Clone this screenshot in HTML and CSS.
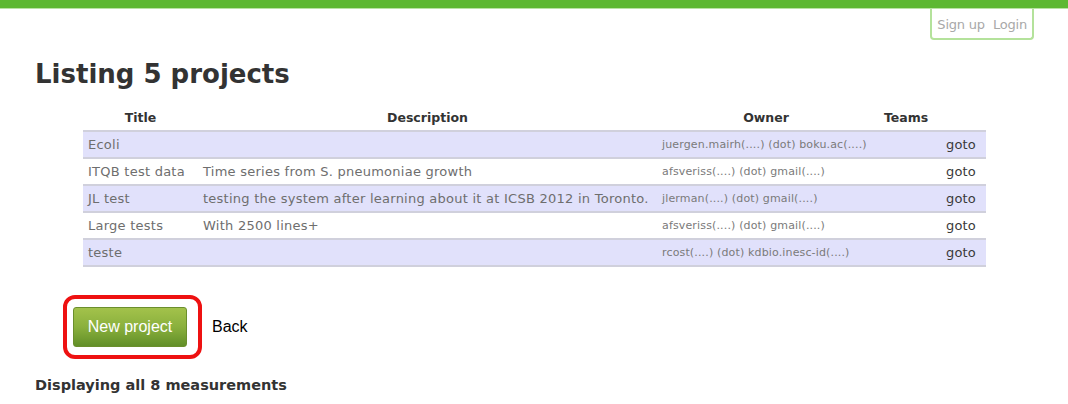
FILE: index.html
```html
<!DOCTYPE html>
<html>
<head>
<meta charset="utf-8">
<link rel="stylesheet" href="styles.css">
</head>
<body>
<div class="topbar"></div>
<div class="userbar">
  <div class="userbox"><a href="#">Sign up</a><a href="#">Login</a></div>
</div>
<main class="content">
  <h1 class="title">Listing 5 projects</h1>
  <table class="projects">
    <thead>
      <tr><th class="c-title">Title</th><th class="c-desc">Description</th><th class="c-owner">Owner</th><th class="c-teams">Teams</th><th class="c-goto"></th></tr>
    </thead>
    <tbody>
      <tr class="odd"><td>Ecoli</td><td></td><td class="owner">juergen.mairh(....) (dot) boku.ac(....)</td><td></td><td class="goto">goto</td></tr>
      <tr><td>ITQB test data</td><td>Time series from S. pneumoniae growth</td><td class="owner">afsveriss(....) (dot) gmail(....)</td><td></td><td class="goto">goto</td></tr>
      <tr class="odd"><td>JL test</td><td>testing the system after learning about it at ICSB 2012 in Toronto.</td><td class="owner">jlerman(....) (dot) gmail(....)</td><td></td><td class="goto">goto</td></tr>
      <tr><td>Large tests</td><td>With 2500 lines+</td><td class="owner">afsveriss(....) (dot) gmail(....)</td><td></td><td class="goto">goto</td></tr>
      <tr class="odd"><td>teste</td><td></td><td class="owner">rcost(....) (dot) kdbio.inesc-id(....)</td><td></td><td class="goto">goto</td></tr>
    </tbody>
  </table>
  <div class="actions">
    <div class="highlight"><a class="btn" href="#">New project</a></div>
    <a class="back" href="#">Back</a>
  </div>
  <h2 class="sub">Displaying all 8 measurements</h2>
</main>
</body>
</html>
```
FILE: styles.css
```css
html, body {
  margin: 0;
  padding: 0;
  background: #fff;
}
body {
  font-family: "DejaVu Sans", Verdana, sans-serif;
  color: #333;
}
.topbar {
  height: 8px;
  background: #5db832;
  border-bottom: 1px solid #b9e3a3;
}
.userbar {
  display: flex;
  justify-content: flex-end;
  padding-right: 34px;
}
.userbox {
  display: flex;
  gap: 8px;
  height: 28px;
  align-items: center;
  padding: 1px 5px 0 5px;
  border: 2px solid #b4e29b;
  border-top: none;
  border-radius: 0 0 4px 4px;
}
.userbox a {
  font-size: 13px;
  color: #a8a8a8;
  text-decoration: none;
  letter-spacing: -0.2px;
}
.content {
  padding: 0 0 0 35px;
}
.title {
  margin: 18px 0 0 0;
  font-size: 26px;
  line-height: 32px;
  font-weight: bold;
  color: #333;
}
.projects {
  margin: 17px 0 0 48px;
  width: 903px;
  border-collapse: collapse;
  font-size: 13px;
  letter-spacing: 0.25px;
}
.projects th {
  font-size: 12.5px;
  letter-spacing: 0;
  font-weight: bold;
  color: #333;
  height: 21px;
  padding: 0 0 2px 0;
  text-align: center;
  vertical-align: middle;
}
.c-title { width: 115px; }
.c-desc { width: 459px; }
.c-owner { width: 218px; }
.c-teams { width: 62px; }
.c-goto { width: 49px; }
.projects td {
  height: 25px;
  padding: 0 5px;
  color: #6e6e6e;
  white-space: nowrap;
  border-top: 2px solid #d0d0dc;
  vertical-align: middle;
}
.projects tbody tr:last-child td {
  border-bottom: 2px solid #d0d0dc;
}
.projects tr.odd td {
  background: #e1e1fb;
}
.projects td.owner {
  font-size: 11px;
  letter-spacing: 0.15px;
  color: #7a7a7a;
}
.projects td.goto {
  text-align: right;
  color: #3a3a3a;
  letter-spacing: 0.2px;
  padding-right: 10px;
}
.actions {
  display: flex;
  align-items: center;
  margin: 28px 0 0 28px;
}
.highlight {
  border: 4px solid #ee1111;
  border-radius: 12px;
  padding: 8px 11px 8px 6px;
}
.btn {
  display: block;
  width: 112px;
  height: 38px;
  line-height: 38px;
  text-align: center;
  font-family: "Liberation Sans", Arial, sans-serif;
  font-size: 16px;
  color: #fff;
  text-decoration: none;
  background: linear-gradient(#a3c24b, #8ab03d 50%, #628f28);
  border: 1px solid #6b8f2c;
  border-radius: 3px;
}
.back {
  margin-left: 10px;
  font-family: "Liberation Sans", Arial, sans-serif;
  font-size: 16px;
  color: #000;
  text-decoration: none;
}
.sub {
  margin: 18px 0 0 0;
  font-size: 14.5px;
  font-weight: bold;
  color: #333;
}
```
